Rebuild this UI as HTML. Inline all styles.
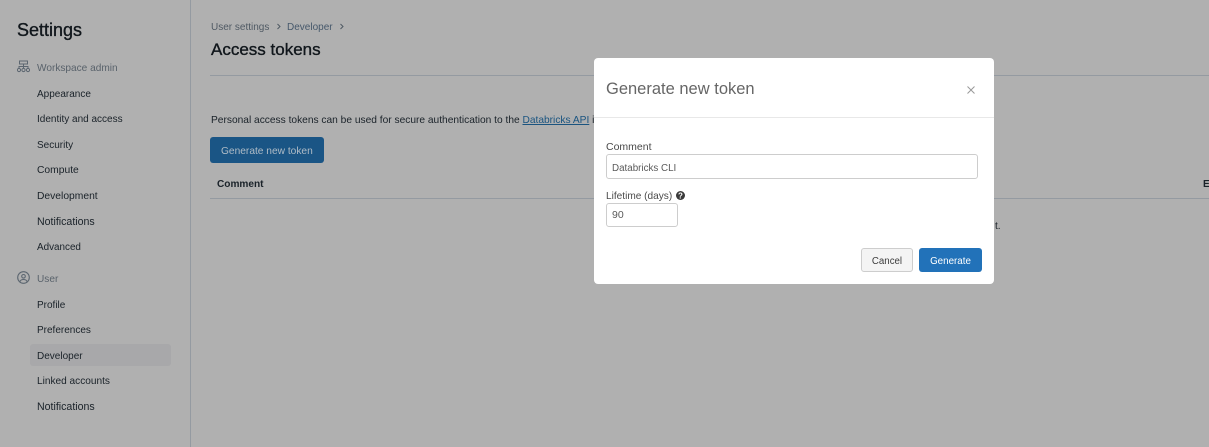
<!DOCTYPE html>
<html>
<head>
<meta charset="utf-8">
<style>
html,body{margin:0;padding:0;width:1209px;height:447px;overflow:hidden;background:#b0b0b0;font-family:"Liberation Sans",sans-serif;}
.t{position:absolute;white-space:nowrap;line-height:14px;font-size:10.1px;color:#1a2229;}
.line{position:absolute;background:#949aa1;height:1px;}
#modal{position:absolute;left:594px;top:58px;width:400px;height:226px;background:#fff;border-radius:4px;}
#modal .t{color:#4a4a4a;}
.box{position:absolute;box-sizing:border-box;border:1px solid #cdcdcd;border-radius:3px;background:#fff;}
.h{-webkit-text-stroke:0.35px #11171c;}
</style>
</head>
<body>
<div style="position:absolute;left:190px;top:0;width:1px;height:447px;background:#949aa1"></div>

<div class="t h" style="left:17px;top:20px;font-size:18px;line-height:20px;color:#11171c">Settings</div>

<svg style="position:absolute;left:17px;top:60px" width="13" height="13" viewBox="0 0 13 13" fill="none" stroke="#5c6670" stroke-width="1"><rect x="2.5" y="1" width="8" height="3"/><path d="M6.500 4v3M2 8V6.500h9V8M6.500 6.500V8"/><circle cx="2" cy="10" r="1.600"/><circle cx="6.500" cy="10" r="1.600"/><circle cx="11" cy="10" r="1.600"/></svg>
<div class="t" style="left:37px;top:62px;color:#59626b">Workspace admin</div>
<div class="t" style="left:37px;top:88px;font-size:10px">Appearance</div>
<div class="t" style="left:37px;top:113px;font-size:10px">Identity and access</div>
<div class="t" style="left:37px;top:139px;font-size:10px">Security</div>
<div class="t" style="left:37px;top:164px;font-size:10.3px">Compute</div>
<div class="t" style="left:37px;top:190px;font-size:10.3px">Development</div>
<div class="t" style="left:37px;top:215px;font-size:10.6px">Notifications</div>
<div class="t" style="left:37px;top:241px;font-size:9.900px">Advanced</div>

<svg style="position:absolute;left:17px;top:271px" width="13" height="13" viewBox="0 0 13 13" fill="none" stroke="#5c6670" stroke-width="1.100"><circle cx="6.500" cy="6.500" r="5.800"/><circle cx="6.500" cy="5.300" r="1.800"/><path d="M3 10.500c.5-1.500 2-2 3.500-2s3 .5 3.500 2"/></svg>
<div class="t" style="left:37px;top:273px;color:#59626b">User</div>
<div class="t" style="left:37px;top:299px;font-size:10px">Profile</div>
<div class="t" style="left:37px;top:324px;font-size:10px">Preferences</div>
<div style="position:absolute;left:30px;top:344px;width:141px;height:22px;background:#a8a8aa;border-radius:3px"></div>
<div class="t" style="left:37px;top:350px;font-size:10px">Developer</div>
<div class="t" style="left:37px;top:375px;font-size:10.100px">Linked accounts</div>
<div class="t" style="left:37px;top:400px;font-size:10.600px">Notifications</div>

<div class="t" style="left:211px;top:21px;color:#4f5963;font-size:10px">User settings</div>
<svg style="position:absolute;left:276px;top:23px" width="6" height="7" viewBox="0 0 6 7" fill="none" stroke="#4f5963"><path d="M1.500 1l2.500 2.500L1.500 6"/></svg>
<div class="t" style="left:287px;top:21px;color:#46586b;font-size:10px">Developer</div>
<svg style="position:absolute;left:339px;top:23px" width="6" height="7" viewBox="0 0 6 7" fill="none" stroke="#4f5963"><path d="M1.500 1l2.500 2.500L1.500 6"/></svg>
<div class="t h" style="left:211px;top:40px;font-size:17px;line-height:20px;color:#11171c">Access tokens</div>
<div class="line" style="left:210px;top:75px;width:999px"></div>

<div class="t" style="left:211px;top:114px;font-size:10.2px">Personal access tokens can be used for secure authentication to the <span style="color:#1a5480;text-decoration:underline">Databricks API</span> i</div>

<div style="position:absolute;left:210px;top:137px;width:114px;height:26px;background:#1a5585;border-radius:3px"></div>
<div class="t" style="left:221px;top:145px;color:#b0bcc6;font-size:10.2px">Generate new token</div>

<div class="t" style="left:217px;top:178px;font-weight:bold;color:#1a2229;font-size:10.100px">Comment</div>
<div class="t" style="left:1203px;top:178px;font-weight:bold">E</div>
<div class="line" style="left:210px;top:198px;width:999px"></div>
<div class="t" style="left:995px;top:220px;color:#1a2229">t.</div>

<div id="modal">
  <div class="t" style="left:12px;top:20px;font-size:16.500px;line-height:22px;color:#666">Generate new token</div>
  <svg style="position:absolute;left:373px;top:28px" width="8" height="8" viewBox="0 0 8 8" stroke="#999" stroke-width="1"><path d="M.5.500l7 7M7.500.500l-7 7"/></svg>
  <div style="position:absolute;left:0;top:59px;width:400px;height:1px;background:#e8e8e8"></div>
  <div class="t" style="left:12px;top:82px;font-size:10.500px">Comment</div>
  <div class="box" style="left:12px;top:96px;width:372px;height:25px"></div>
  <div class="t" style="left:18px;top:104px;color:#5a5a5a;font-size:9.800px">Databricks CLI</div>
  <div class="t" style="left:12px;top:132px">Lifetime (days)</div>
  <svg style="position:absolute;left:82px;top:133px" width="9" height="9" viewBox="0 0 9 9"><circle cx="4.500" cy="4.500" r="4.500" fill="#3a3a3a"/><text x="4.500" y="7.500" font-size="8" font-weight="bold" text-anchor="middle" fill="#fff" font-family="Liberation Sans">?</text></svg>
  <div class="box" style="left:12px;top:145px;width:72px;height:24px"></div>
  <div class="t" style="left:18px;top:150px;color:#5a5a5a;font-size:10.500px">90</div>
  <div class="box" style="left:267px;top:190px;width:52px;height:24px;background:#f4f4f4"></div>
  <div class="t" style="left:267px;top:197px;width:52px;text-align:center;color:#3c3c3c;font-size:9.700px">Cancel</div>
  <div style="position:absolute;left:325px;top:190px;width:63px;height:24px;background:#2272b9;border-radius:3px"></div>
  <div class="t" style="left:325px;top:197px;width:63px;text-align:center;color:#fff;font-size:9.800px">Generate</div>
</div>
</body>
</html>
